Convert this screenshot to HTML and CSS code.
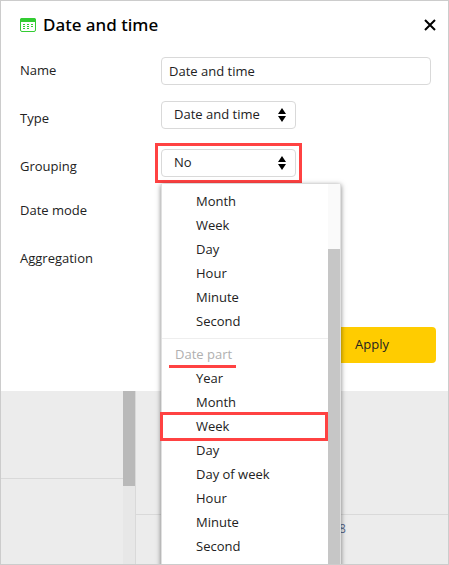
FILE: index.html
```html
<!DOCTYPE html>
<html lang="en">
<head>
<meta charset="utf-8">
<title>Date and time</title>
<link rel="stylesheet" href="styles.css">
</head>
<body>
<div class="frame">
  <form class="dialog" role="dialog" aria-labelledby="title">
    <header class="header">
      <svg class="header-icon" viewBox="0 0 16 14" aria-hidden="true">
        <rect x=".5" y=".5" width="15" height="13" rx="1.5" fill="#fff" stroke="#3c3"/>
        <path d="M0 4V2Q0 0 2 0H14Q16 0 16 2V4Z" fill="#3c3"/>
        <path d="M7 6.500h2M11 6.500h2M3 6.500h2M3 8.500h2M7 8.500h2M11 8.500h2M3 10.500h2M7 10.500h2" stroke="#3c3"/>
      </svg>
      <h1 class="title" id="title">Date and time</h1>
      <button class="close" type="button" aria-label="Close">
        <svg viewBox="0 0 12 12" aria-hidden="true"><path d="M1 1L11 11M11 1L1 11" stroke="#000" stroke-width="2"/></svg>
      </button>
    </header>
    <div class="row row-text">
      <label class="label" for="name">Name</label>
      <input class="input" id="name" type="text" value="Date and time">
    </div>
    <div class="row row-select">
      <label class="label" for="type">Type</label>
      <div class="select-box">
        <select class="select" id="type"><option>Date and time</option></select>
        <svg class="arrows" viewBox="0 0 8 14" aria-hidden="true"><path d="M4 0L8 6H0ZM0 8H8L4 14Z"/></svg>
      </div>
    </div>
    <div class="row row-select">
      <label class="label" for="grouping">Grouping</label>
      <div class="select-box select-marked">
        <select class="select" id="grouping"><option>No</option></select>
        <svg class="arrows" viewBox="0 0 8 14" aria-hidden="true"><path d="M4 0L8 6H0ZM0 8H8L4 14Z"/></svg>
        <div class="menu">
          <div class="list" role="listbox" aria-label="Grouping">
            <div class="group">
              <div class="option" role="option">Month</div>
              <div class="option" role="option">Week</div>
              <div class="option" role="option">Day</div>
              <div class="option" role="option">Hour</div>
              <div class="option" role="option">Minute</div>
              <div class="option" role="option">Second</div>
            </div>
            <div class="group" role="group" aria-labelledby="part">
              <div class="group-title" id="part">Date part</div>
              <div class="option" role="option">Year</div>
              <div class="option" role="option">Month</div>
              <div class="option option-marked" role="option">Week</div>
              <div class="option" role="option">Day</div>
              <div class="option" role="option">Day of week</div>
              <div class="option" role="option">Hour</div>
              <div class="option" role="option">Minute</div>
              <div class="option" role="option">Second</div>
            </div>
          </div>
          <div class="menu-track"><div class="menu-thumb"></div></div>
        </div>
      </div>
    </div>
    <div class="row"><span class="label">Date mode</span></div>
    <div class="row"><span class="label">Aggregation</span></div>
    <footer class="footer"><button class="apply" type="submit">Apply</button></footer>
  </form>
  <div class="page">
    <div class="side"><div class="side-cell"></div></div>
    <div class="page-track"><div class="page-thumb"></div></div>
    <div class="content"><div class="content-cell"></div><div class="value">8</div></div>
  </div>
</div>
</body>
</html>
```
FILE: styles.css
```css
* {
  box-sizing: border-box;
}

body {
  margin: 0;
  font: 13px/24px "Open Sans", "Noto Sans", sans-serif;
  color: #222;
}

button,
input,
select {
  font: inherit;
  color: inherit;
}

.frame {
  display: flex;
  flex-direction: column;
  height: 100vh;
  overflow: hidden;
  border: 1px solid #ccc;
  background: #ececec;
}

.dialog {
  position: relative;
  z-index: 1;
  display: flex;
  flex-direction: column;
  gap: 12px;
  padding: 12px 12px 28px 19px;
  background: #fff;
}

.header {
  display: flex;
  align-items: center;
  height: 24px;
  margin-bottom: 8px;
}

.header-icon {
  width: 16px;
  height: 14px;
  margin-right: 7px;
}

.title {
  flex: 1;
  margin: 0;
  font-family: "Noto Sans", "Open Sans", sans-serif;
  font-size: 17px;
  font-weight: 500;
  line-height: 24px;
  color: #000;
}

.close {
  display: flex;
  padding: 0;
  border: 0;
  background: none;
}

.close svg {
  width: 12px;
  height: 12px;
}

.row {
  display: flex;
  align-items: flex-start;
  height: 36px;
  padding-right: 5px;
}

.row-text {
  height: 32px;
}

.label {
  flex: 0 0 141px;
  line-height: 26px;
}

.row-select .label {
  line-height: 34px;
}

.input {
  flex: 1;
  min-width: 0;
  height: 28px;
  padding: 0 7px;
  border: 1px solid #d9d9d9;
  border-radius: 4px;
  background: #fff;
}

.select-box {
  position: relative;
  width: 135px;
}

.select {
  display: block;
  width: 100%;
  height: 28px;
  padding: 0 12px 2px;
  border: 1px solid #d9d9d9;
  border-radius: 4px;
  background: #fff;
  appearance: none;
}

.arrows {
  position: absolute;
  top: 7px;
  right: 10px;
  width: 8px;
  height: 14px;
  pointer-events: none;
}

.select-marked::before {
  content: "";
  position: absolute;
  inset: -6px;
  border: 3px solid #ff4242;
  pointer-events: none;
}

.menu {
  position: absolute;
  top: 35px;
  left: 0;
  display: flex;
  width: 180px;
  border: 1px solid #e0e0e0;
  border-top: 0;
  background: #fff;
  box-shadow: 0 1px 5px rgba(0, 0, 0, 0.5);
}

.list {
  flex: 1;
  padding-bottom: 24px;
}

.group {
  padding: 5px 0;
}

.group + .group {
  padding-top: 3px;
  border-top: 1px solid #eee;
}

.option {
  position: relative;
  height: 24px;
  padding-left: 34px;
}

.option-marked::before {
  content: "";
  position: absolute;
  inset: -2px 0 -3px -2px;
  border: 3px solid #ff4242;
}

.group-title {
  position: relative;
  height: 24px;
  padding-left: 13px;
  color: #b0b0b0;
}

.group-title::after {
  content: "";
  position: absolute;
  top: 23px;
  left: 7px;
  width: 67px;
  height: 3px;
  background: #ff4242;
}

.menu-track {
  width: 12px;
  padding-top: 65px;
  background: #fafafa;
}

.menu-thumb {
  height: 100%;
  background: #c6c6c6;
}

.footer {
  display: flex;
  justify-content: flex-end;
  padding-top: 34px;
}

.apply {
  width: 128px;
  height: 36px;
  padding: 0 0 2px;
  border: 0;
  border-radius: 4px;
  background: #fc0;
}

.page {
  display: flex;
  flex: 1;
}

.side {
  width: 122px;
}

.side-cell {
  height: 88px;
  border-bottom: 1px solid #d9d9d9;
}

.page-track {
  width: 13px;
  border-right: 1px solid #d9d9d9;
  background: #e7e7e7;
}

.page-thumb {
  height: 95px;
  background: #b9b9b9;
}

.content {
  flex: 1;
}

.content-cell {
  height: 124px;
  border-bottom: 1px solid #d9d9d9;
}

.value {
  padding: 4px 0 0 203px;
  font-size: 12px;
  line-height: 20px;
  color: #57678a;
}
```
